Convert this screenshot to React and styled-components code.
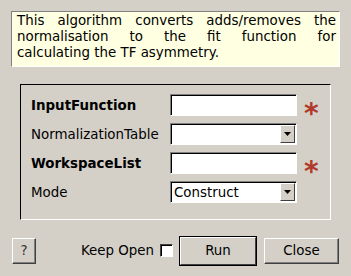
import React from "react"
import styled, { createGlobalStyle } from 'styled-components'

const Global = createGlobalStyle`
  html, body {
    margin: 0;
    padding: 0;
    background: #d4d0c8;
  }
  body {
    font-family: "DejaVu Sans", "Liberation Sans", sans-serif;
    font-size: 13.4px;
    color: #000;
  }
`

const Dialog = styled.div`
  width: 351px;
  height: 276px;
  box-sizing: border-box;
  padding: 11px 11px 0 11px;
  display: flex;
  flex-direction: column;
`

const Description = styled.div`
  width: 329px;
  height: 56px;
  box-sizing: border-box;
  background: #ffffe1;
  border-top: 1px solid #808080;
  border-left: 1px solid #808080;
  border-right: 1px solid #fff;
  border-bottom: 1px solid #fff;
  padding: 1px 3px 0 5px;
  line-height: 16px;
`

// each wrapped line of the description, justified like the original label
const DescLine = styled.div`
  white-space: nowrap;
  text-align: ${p => (p.$last ? 'left' : 'justify')};
  text-align-last: ${p => (p.$last ? 'left' : 'justify')};
`

const GroupBox = styled.div`
  margin: 17px 0 0 9px;
  width: 311px;
  height: 136px;
  box-sizing: border-box;
  border-top: 1px solid #000;
  border-left: 1px solid #000;
  border-right: 1px solid #fff;
  border-bottom: 1px solid #fff;
  padding: 9px 0 0 10px;
  display: grid;
  grid-template-columns: 139px 127px 34px;
  grid-auto-rows: 22px;
  row-gap: 7px;
  align-items: center;
`

const Label = styled.div`
  font-weight: ${p => (p.$bold ? 'bold' : 'normal')};
  white-space: nowrap;
`

const Field = styled.div`
  position: relative;
  height: 22px;
  box-sizing: border-box;
  background: #fff;
  border-top: 1px solid #808080;
  border-left: 1px solid #808080;
  border-right: 1px solid #fff;
  border-bottom: 1px solid #fff;
  box-shadow: inset 1px 1px 0 #000;
  padding: 2px 0 0 3px;
  line-height: 17px;
`

const DropButton = styled.div`
  position: absolute;
  right: 1px;
  top: 1px;
  width: 15px;
  height: 18px;
  box-sizing: border-box;
  background: #d4d0c8;
  border-top: 1px solid #fff;
  border-left: 1px solid #fff;
  border-right: 1px solid #404040;
  border-bottom: 1px solid #404040;
  display: flex;
  align-items: center;
  justify-content: center;
`

const Star = styled.div`
  color: #b0392b;
  font-size: 28px;
  font-weight: bold;
  line-height: 22px;
  padding: 9px 0 0 7px;
  height: 22px;
  box-sizing: border-box;
`

const Footer = styled.div`
  margin-top: 17px;
  padding-right: 1px;
  display: flex;
  align-items: center;
  height: 27px;
`

const Button = styled.div`
  box-sizing: border-box;
  height: ${p => (p.$default ? 28 : 26)}px;
  width: ${p => p.$w}px;
  background: #d4d0c8;
  border-top: 1px solid #fff;
  border-left: 1px solid #fff;
  border-right: 1px solid #404040;
  border-bottom: 1px solid #404040;
  box-shadow: ${p => (p.$default ? '0 0 0 1px #000' : 'inset -1px -1px 0 #808080')};
  display: flex;
  align-items: center;
  justify-content: center;
`

const HelpButton = styled(Button)`
  margin-left: 1px;
  color: #333;
`

const KeepOpen = styled.label`
  margin-left: auto;
  display: flex;
  align-items: center;
  gap: 6px;
`

const Check = styled.span`
  display: inline-block;
  width: 13px;
  height: 13px;
  box-sizing: border-box;
  background: #fff;
  border-top: 1px solid #404040;
  border-left: 1px solid #404040;
  border-right: 1px solid #fff;
  border-bottom: 1px solid #fff;
  box-shadow: inset 1px 1px 0 #000;
`

const RunButton = styled(Button)`
  margin-left: 7px;
`

const CloseButton = styled(Button)`
  margin-left: 8px;
`

const Arrow = () => (
  <svg width="7" height="4" viewBox="0 0 7 4">
    <polygon points="0,0 7,0 3.5,4" fill="#000" />
  </svg>
)

const description = [
  'This algorithm converts adds/removes the',
  'normalisation to the fit function for',
  'calculating the TF asymmetry.',
]

const rows = [
  { label: 'InputFunction', bold: true, combo: false, value: '', required: true },
  { label: 'NormalizationTable', bold: false, combo: true, value: '', required: false },
  { label: 'WorkspaceList', bold: true, combo: false, value: '', required: true },
  { label: 'Mode', bold: false, combo: true, value: 'Construct', required: false },
]

const App = () => (
  <>
    <Global />
    <Dialog>
      <Description>
        {description.map((line, i) => (
          <DescLine key={i} $last={i === description.length - 1}>{line}</DescLine>
        ))}
      </Description>
      <GroupBox>
        {rows.map(r => (
          <React.Fragment key={r.label}>
            <Label $bold={r.bold}>{r.label}</Label>
            <Field>
              {r.value}
              {r.combo && <DropButton><Arrow /></DropButton>}
            </Field>
            <Star>{r.required ? '*' : ''}</Star>
          </React.Fragment>
        ))}
      </GroupBox>
      <Footer>
        <HelpButton $w={24}>?</HelpButton>
        <KeepOpen>Keep Open <Check /></KeepOpen>
        <RunButton $w={76} $default>Run</RunButton>
        <CloseButton $w={75}>Close</CloseButton>
      </Footer>
    </Dialog>
  </>
)

export default App
